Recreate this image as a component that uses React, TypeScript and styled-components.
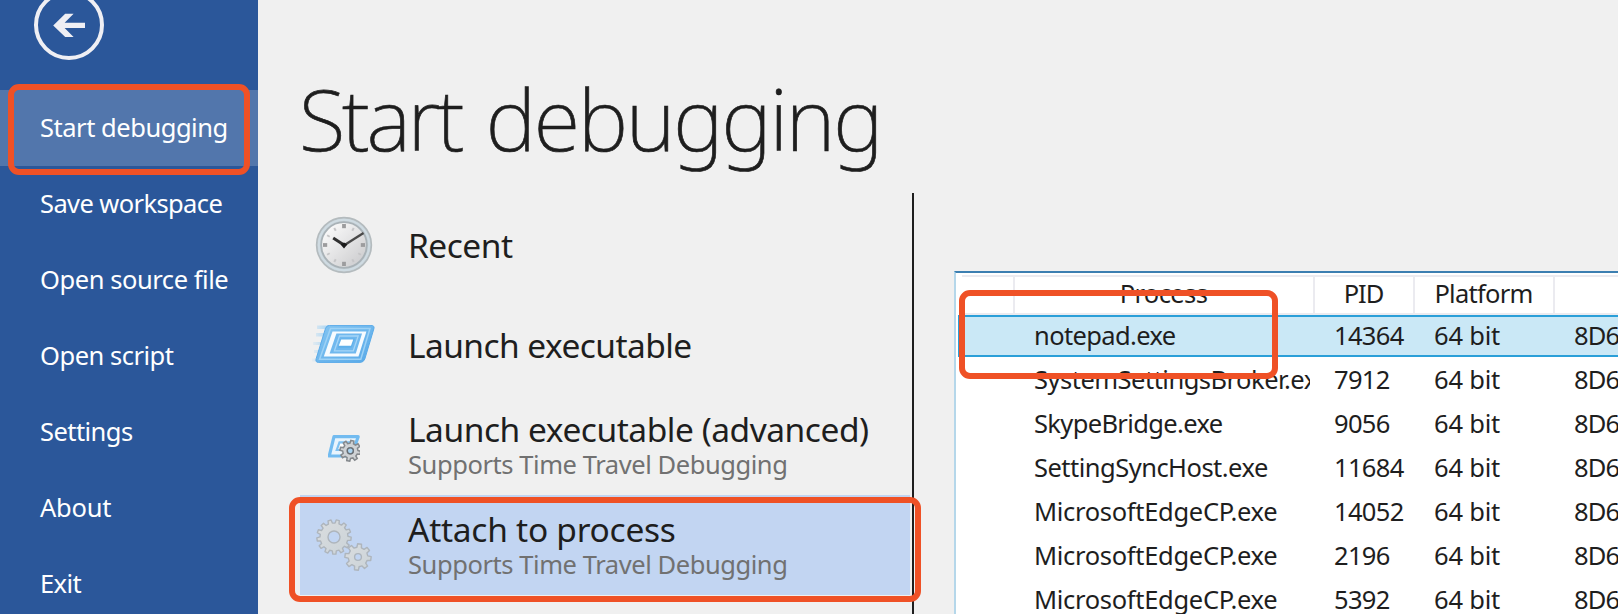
import React from "react";
import styled, { createGlobalStyle } from "styled-components";

const GlobalStyle = createGlobalStyle`
  *, *::before, *::after { box-sizing: border-box; }
  body {
    margin: 0;
    background: #f0f0f0;
    color: #1e1e1e;
    font-family: "Noto Sans", "Open Sans", sans-serif;
    overflow: hidden;
  }
`;

const Page = styled.div`
  position: relative;
  display: flex;
  width: 1618px;
  height: 614px;
  overflow: hidden;
  background: #f0f0f0;
`;

const Text = styled.span<{ $spacing?: number }>`
  letter-spacing: ${(p) => p.$spacing ?? -0.5}px;
  white-space: nowrap;
`;

/* ---------- Sidebar ---------- */

const Sidebar = styled.nav`
  flex: 0 0 258px;
  display: flex;
  flex-direction: column;
  background: #2b579a;
  color: #fff;
`;

const BackButton = styled.div`
  flex: 0 0 90px;
  padding-left: 33px;
  svg { display: block; }
`;

const NavItem = styled.div<{ $active?: boolean }>`
  flex: 0 0 76px;
  display: flex;
  align-items: center;
  padding: 0 0 2px 40px;
  font-size: 25.5px;
  line-height: 36px;
  background: ${(p) => (p.$active ? "#5276ac" : "transparent")};
`;

/* ---------- Main area ---------- */

const Main = styled.main`
  flex: 1;
  min-width: 0;
  display: flex;
  flex-direction: column;
  padding-left: 42px;
`;

const Title = styled.h1`
  flex: 0 0 193px;
  margin: 0;
  padding-top: 61px;
  font-size: 85px;
  line-height: 115px;
  font-weight: 200;
  text-indent: -1px;
  word-spacing: 5.5px;
  -webkit-text-stroke: 0.7px #1e1e1e;
`;

const Body = styled.div`
  flex: 1;
  display: flex;
  min-height: 0;
`;

const OptionList = styled.div`
  flex: 0 0 614px;
  display: flex;
  flex-direction: column;
  padding: 2px 2px 0 0;
  border-right: 2px solid #1e1e1e;
`;

const Option = styled.div<{ $active?: boolean }>`
  flex: 0 0 100px;
  display: flex;
  align-items: center;
  background: ${(p) => (p.$active ? "#c2d5f2" : "transparent")};
`;

const OptionIcon = styled.div`
  flex: 0 0 88px;
  margin-right: 20px;
  display: flex;
  justify-content: center;
  svg { display: block; }
`;

const OptionText = styled.div<{ $withNote: boolean }>`
  display: flex;
  flex-direction: column;
  gap: 1px;
  padding-bottom: ${(p) => (p.$withNote ? 2 : 0)}px;
`;

const OptionTitle = styled.div`
  font-size: 33.5px;
  line-height: 38px;
`;

const OptionNote = styled.div`
  font-size: 25.5px;
  line-height: 30px;
  color: #717171;
`;

/* ---------- Process table ---------- */

const Panel = styled.section`
  flex: 1;
  min-width: 0;
  margin: 78px 0 0 40px;
  padding: 2px 0 0;
  border-top: 2px solid #3c7fb1;
  border-left: 2px solid #b5d7ea;
  background: #fff;
  font-size: 25.5px;
  line-height: 36px;
  overflow: hidden;
`;

const HeaderRow = styled.div`
  display: grid;
  grid-template-columns: 53px 300px 100px 140px 1fr;
  height: 40px;
  margin-left: 6px;
  border-top: 2px solid #ebebf0;
  border-bottom: 2px solid #ebebf0;
`;

const HeaderCell = styled.div`
  display: flex;
  align-items: center;
  justify-content: center;
  height: 36px;
  line-height: 32px;
  padding: 0 1px 4px 0;
  border-right: 2px solid #ebebf0;
  &:last-child { border-right: 0; }
`;

const Row = styled.div<{ $selected?: boolean }>`
  display: grid;
  grid-template-columns: 55px 300px 100px 140px 1fr;
  align-items: center;
  height: 42px;
  margin: 0 0 2px 2px;
  padding-bottom: 2px;
  border: 2px solid ${(p) => (p.$selected ? "#2a9fd8" : "transparent")};
  border-right: 0;
  background: ${(p) => (p.$selected ? "#cae8f6" : "transparent")};
`;

const Cell = styled.div`
  margin-right: 5px;
  padding-left: 19px;
  overflow: hidden;
  white-space: nowrap;
  &:last-child { margin-right: 0; }
`;

const Marker = styled.div<{ $x: number; $y: number; $w: number; $h: number }>`
  position: absolute;
  left: ${(p) => p.$x}px;
  top: ${(p) => p.$y}px;
  width: ${(p) => p.$w}px;
  height: ${(p) => p.$h}px;
  border: 6px solid #ef5126;
  border-radius: 11px;
`;

/* ---------- Icons ---------- */

function gearPath(cx: number, cy: number, outer: number, root: number, teeth: number, turn = 0) {
  const step = (Math.PI * 2) / teeth;
  const pts: string[] = [];
  for (let i = 0; i < teeth; i++) {
    const a = i * step + turn;
    const corners: [number, number][] = [
      [root, -0.3], [outer, -0.19], [outer, 0.19], [root, 0.3],
    ];
    corners.forEach(([r, t]) =>
      pts.push(`${(cx + r * Math.cos(a + t * step)).toFixed(2)} ${(cy + r * Math.sin(a + t * step)).toFixed(2)}`)
    );
  }
  return `M${pts.join("L")}Z`;
}

function holePath(cx: number, cy: number, r: number) {
  return `M${cx - r} ${cy}a${r} ${r} 0 1 0 ${2 * r} 0a${r} ${r} 0 1 0 ${-2 * r} 0Z`;
}

const BackIcon = () => (
  <svg width="72" height="62" viewBox="33 0 72 62">
    <circle cx="69" cy="25" r="33" fill="none" stroke="#efeff4" strokeWidth="4" />
    <path d="M53.2 25.4L65.2 13.8H73.6L64.6 22.8H85V28H64.6L73.6 37H65.2Z" fill="#efeff4" />
  </svg>
);

const ClockIcon = () => (
  <svg width="58" height="58" viewBox="-29 -29 58 58">
    <defs>
      <linearGradient id="face" x1="0" y1="0" x2="1" y2="1">
        <stop offset="0.1" stopColor="#fbfbfb" />
        <stop offset="0.9" stopColor="#cdcdcf" />
      </linearGradient>
    </defs>
    <circle r="27.4" fill="#c5d0d6" stroke="#b4bbbe" strokeWidth="1.6" />
    <circle r="25.2" fill="none" stroke="#cfdbe2" strokeWidth="2" />
    <circle r="22.8" fill="url(#face)" stroke="#a9b2b7" strokeWidth="1.8" />
    {Array.from({ length: 12 }, (_, i) => (
      <path
        key={i}
        d={i % 3 ? "M0 -19.5V-16.5" : "M0 -21V-16.8"}
        stroke={i % 3 ? "#c6c6c8" : "#9c9c9e"}
        strokeWidth={i % 3 ? 2 : 3.8}
        transform={`rotate(${i * 30})`}
      />
    ))}
    <path d="M0 0L-10.8 -7" stroke="#303030" strokeWidth="3" />
    <path d="M-1 1L19.5 -12" stroke="#484848" strokeWidth="2.3" />
    <path d="M-3.4 -0.5L0 -2.4L3.4 -0.5L0 3.4Z" fill="#1a1a1a" />
  </svg>
);

const LaunchIcon = () => (
  <svg width="64" height="40" viewBox="312 325 64 40">
    <defs>
      <linearGradient id="frame" x1="0" y1="0" x2="1" y2="1">
        <stop offset="0" stopColor="#84c5f2" />
        <stop offset="1" stopColor="#58a9e8" />
      </linearGradient>
      <linearGradient id="trail" x1="0" y1="0" x2="1" y2="0">
        <stop offset="0" stopColor="#8fcbf5" stopOpacity="0.1" />
        <stop offset="1" stopColor="#8fcbf5" stopOpacity="0.8" />
      </linearGradient>
    </defs>
    <path
      d="M317 325.5H330V329H317ZM316 333H328V336.5H316ZM313 342H325V345H313ZM314 350H322V353H314ZM312 358.5H320V361.5H312Z"
      fill="url(#trail)"
    />
    <path d="M329.5 325.4H371Q375 325.4 373.8 329L364.8 359Q363.6 362.4 360 362.4H318.5Q315 362.4 316.2 358.6L325.5 328.4Q326.5 325.4 329.5 325.4Z" fill="url(#frame)" stroke="#5aabe9" strokeWidth="1" />
    <path d="M330.5 328.5H370L360.8 359.3H319.6Z" fill="none" stroke="#9dd2f6" strokeWidth="1.5" />
    <path d="M332.5 331.6H366.4L358.5 356.6H323.8Z" fill="#f6fbff" />
    <path d="M336.4 333.5H362L355.8 353.6H329.6Z" fill="#70b8ee" />
    <path d="M339.5 336H358.2L353.3 350.8H334.4Z" fill="none" stroke="#a5d5f7" strokeWidth="1.3" />
    <path d="M341 338.5H355L351.5 347.8H337.8Z" fill="#60b0ea" />
    <path d="M341.2 339.6H353.2L351 345.8H338.8Z" fill="#fff" />
  </svg>
);

const AdvancedIcon = () => (
  <svg width="32" height="34" viewBox="328 428 32 34">
    <path d="M334 436.7H358.2L351.3 456H329.2Z" fill="#e8f4fd" stroke="#72bbf0" strokeWidth="3.2" strokeLinejoin="round" />
    <path d="M339.5 442.3H351.5L349 450H336.8Z" fill="#fff" stroke="#7fc1f1" strokeWidth="2.2" />
    <path
      d={gearPath(350.3, 450.8, 10.4, 7.6, 8, 0.2) + holePath(350.3, 450.8, 3)}
      fill="#cfd2d5" stroke="#85898d" strokeWidth="1.5" fillRule="evenodd"
    />
    <circle cx="350.3" cy="450.8" r="3" fill="#a9d3f0" stroke="#686e74" strokeWidth="1.3" />
  </svg>
);

const GearsIcon = () => (
  <svg width="58" height="54" viewBox="315 518 58 54">
    <defs>
      <linearGradient id="gear" x1="0" y1="0" x2="1" y2="1">
        <stop offset="0" stopColor="#dadddf" />
        <stop offset="1" stopColor="#cbd3d8" />
      </linearGradient>
    </defs>
    <g fill="url(#gear)" stroke="#aeb5bc" strokeWidth="1.4" fillRule="evenodd" strokeLinejoin="round">
      <path d={gearPath(334, 537, 17.2, 14, 13, 0.1) + holePath(334, 537, 6)} />
      <path d={gearPath(358, 557, 13.2, 9.8, 8, 0.12) + holePath(358, 557, 3.4)} />
    </g>
  </svg>
);

/* ---------- Data ---------- */

const navItems: { label: string; spacing: number; active?: boolean }[] = [
  { label: "Start debugging", spacing: -0.47, active: true },
  { label: "Save workspace", spacing: -0.61 },
  { label: "Open source file", spacing: -0.44 },
  { label: "Open script", spacing: -0.48 },
  { label: "Settings", spacing: -0.55 },
  { label: "About", spacing: -0.25 },
  { label: "Exit", spacing: -0.58 },
];

const options: { label: string; spacing: number; note?: string; icon: React.ReactNode; active?: boolean }[] = [
  { label: "Recent", spacing: -0.5, icon: <ClockIcon /> },
  { label: "Launch executable", spacing: -0.56, icon: <LaunchIcon /> },
  { label: "Launch executable (advanced)", spacing: -0.46, note: "Supports Time Travel Debugging", icon: <AdvancedIcon /> },
  { label: "Attach to process", spacing: -0.26, note: "Supports Time Travel Debugging", icon: <GearsIcon />, active: true },
];

const headers: [string, number][] = [["", 0], ["Process", -0.6], ["PID", -1.0], ["Platform", -0.74], ["", 0]];

const processes: { name: string; spacing: number; pid: string }[] = [
  { name: "notepad.exe", spacing: -0.63, pid: "14364" },
  { name: "SystemSettingsBroker.exe", spacing: -0.51, pid: "7912" },
  { name: "SkypeBridge.exe", spacing: -0.65, pid: "9056" },
  { name: "SettingSyncHost.exe", spacing: -0.52, pid: "11684" },
  { name: "MicrosoftEdgeCP.exe", spacing: -0.31, pid: "14052" },
  { name: "MicrosoftEdgeCP.exe", spacing: -0.31, pid: "2196" },
  { name: "MicrosoftEdgeCP.exe", spacing: -0.31, pid: "5392" },
];

export default function App() {
  return (
    <>
      <GlobalStyle />
      <Page>
        <Sidebar>
          <BackButton><BackIcon /></BackButton>
          {navItems.map((n) => (
            <NavItem key={n.label} $active={n.active}>
              <Text $spacing={n.spacing}>{n.label}</Text>
            </NavItem>
          ))}
        </Sidebar>
        <Main>
          <Title><Text $spacing={-3.3}>Start </Text><Text $spacing={-2.1}>debugging</Text></Title>
          <Body>
            <OptionList>
              {options.map((o) => (
                <Option key={o.label} $active={o.active}>
                  <OptionIcon>{o.icon}</OptionIcon>
                  <OptionText $withNote={!!o.note}>
                    <OptionTitle><Text $spacing={o.spacing}>{o.label}</Text></OptionTitle>
                    {o.note && <OptionNote><Text $spacing={-0.43}>{o.note}</Text></OptionNote>}
                  </OptionText>
                </Option>
              ))}
            </OptionList>
            <Panel>
              <HeaderRow>
                {headers.map(([label, spacing], i) => (
                  <HeaderCell key={i}><Text $spacing={spacing}>{label}</Text></HeaderCell>
                ))}
              </HeaderRow>
              {processes.map((p, i) => (
                <Row key={p.pid} $selected={i === 0}>
                  <Cell />
                  <Cell><Text $spacing={p.spacing}>{p.name}</Text></Cell>
                  <Cell><Text $spacing={-0.65}>{p.pid}</Text></Cell>
                  <Cell><Text $spacing={-0.21}>64 bit</Text></Cell>
                  <Cell><Text $spacing={-0.8}>8D6</Text></Cell>
                </Row>
              ))}
            </Panel>
          </Body>
        </Main>
        <Marker $x={8} $y={84} $w={242} $h={91} />
        <Marker $x={289} $y={497} $w={632} $h={105} />
        <Marker $x={959} $y={290} $w={319} $h={89} />
      </Page>
    </>
  );
}
